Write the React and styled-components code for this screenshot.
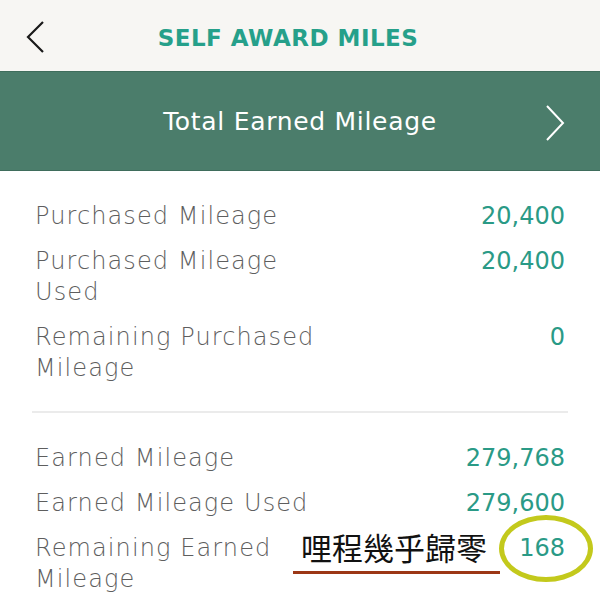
import styled, { createGlobalStyle } from "styled-components";

const GlobalStyle = createGlobalStyle`
  html, body {
    margin: 0;
    padding: 0;
    background: #ffffff;
  }
  body {
    width: 600px;
    height: 600px;
    overflow: hidden;
    font-family: "DejaVu Sans", "Noto Sans", sans-serif;
  }
`;

const purchased = [
  { label: "Purchased Mileage", value: "20,400" },
  { label: "Purchased Mileage\nUsed", value: "20,400" },
  { label: "Remaining Purchased\nMileage", value: "0" },
];

const earned = [
  { label: "Earned Mileage", value: "279,768" },
  { label: "Earned Mileage Used", value: "279,600" },
  { label: "Remaining Earned\nMileage", value: "168", note: "哩程幾乎歸零" },
];

function App() {
  return (
    <Screen>
      <GlobalStyle />
      <TopBar>
        <BackButton aria-label="back">
          <svg width="22" height="34" viewBox="0 0 22 34">
            <path d="M19 2 L4 17 L19 32" fill="none" stroke="#1a1a1a" strokeWidth="2.2" />
          </svg>
        </BackButton>
        <Title>SELF AWARD MILES</Title>
      </TopBar>

      <Banner>
        <BannerTitle>Total Earned Mileage</BannerTitle>
        <Chevron>
          <svg width="22" height="38" viewBox="0 0 22 38">
            <path d="M3 2 L19 19 L3 36" fill="none" stroke="#ffffff" strokeWidth="2" />
          </svg>
        </Chevron>
      </Banner>

      <Section>
        {purchased.map((row) => (
          <Row key={row.label}>
            <Label>{row.label}</Label>
            <Value>{row.value}</Value>
          </Row>
        ))}
      </Section>

      <Divider />

      <Section $last>
        {earned.map((row) => (
          <Row key={row.label}>
            <Label>{row.label}</Label>
            <Value>
              {row.note && (
                <Note>
                  {row.note}
                  <Underline />
                </Note>
              )}
              {row.note && <Circle />}
              {row.value}
            </Value>
          </Row>
        ))}
      </Section>
    </Screen>
  );
}

const Screen = styled.div`
  width: 600px;
  height: 600px;
  display: flex;
  flex-direction: column;
  background: #ffffff;
  overflow: hidden;
`;

const TopBar = styled.header`
  height: 71px;
  flex-shrink: 0;
  display: flex;
  align-items: center;
  justify-content: center;
  background: #f7f6f3;
  position: relative;
`;

const BackButton = styled.div`
  position: absolute;
  left: 24px;
  top: 20px;
  display: flex;
`;

const Title = styled.h1`
  margin: 4px 24px 0 0;
  font-family: "DejaVu Sans", sans-serif;
  font-weight: 700;
  font-size: 23px;
  letter-spacing: 0.5px;
  color: #26a08a;
`;

const Banner = styled.div`
  height: 100px;
  flex-shrink: 0;
  display: flex;
  align-items: center;
  justify-content: center;
  background: #4b7d6b;
  border-top: 1px solid #3f6d5c;
  border-bottom: 1px solid #3f6d5c;
  box-sizing: border-box;
  position: relative;
`;

const BannerTitle = styled.h2`
  margin: 0;
  font-family: "DejaVu Sans", sans-serif;
  font-weight: 400;
  font-size: 25px;
  letter-spacing: 0.7px;
  color: #ffffff;
`;

const Chevron = styled.div`
  position: absolute;
  right: 34px;
  top: 32px;
  display: flex;
`;

const Section = styled.section`
  display: flex;
  flex-direction: column;
  gap: 14px;
  padding: ${(p) => (p.$last ? "30px 35px 0" : "30px 35px 27px")};
`;

const Row = styled.div`
  display: flex;
  justify-content: space-between;
  align-items: flex-start;
`;

const Label = styled.div`
  white-space: pre-line;
  font-family: "DejaVu Sans", sans-serif;
  font-weight: 300;
  font-size: 24px;
  letter-spacing: 1.1px;
  line-height: 31px;
  color: #5e5e5e;
`;

const Value = styled.div`
  position: relative;
  font-family: "DejaVu Sans", sans-serif;
  font-weight: 400;
  font-size: 24px;
  line-height: 31px;
  color: #2a9a86;
`;

const Note = styled.span`
  position: absolute;
  right: 78px;
  top: -4px;
  white-space: nowrap;
  font-family: "Noto Sans CJK TC", sans-serif;
  font-weight: 400;
  font-size: 31px;
  line-height: 36px;
  color: #111111;
`;

const Underline = styled.span`
  position: absolute;
  left: -8px;
  right: -13px;
  top: 42px;
  height: 3px;
  background: #9c3716;
`;

const Circle = styled.span`
  position: absolute;
  left: -20px;
  right: -28px;
  top: -18px;
  bottom: -18px;
  border: 5px solid #c3c91c;
  border-radius: 50%;
`;

const Divider = styled.hr`
  margin: 0 32px;
  border: none;
  border-top: 2px solid #ebebeb;
`;

export default App;
